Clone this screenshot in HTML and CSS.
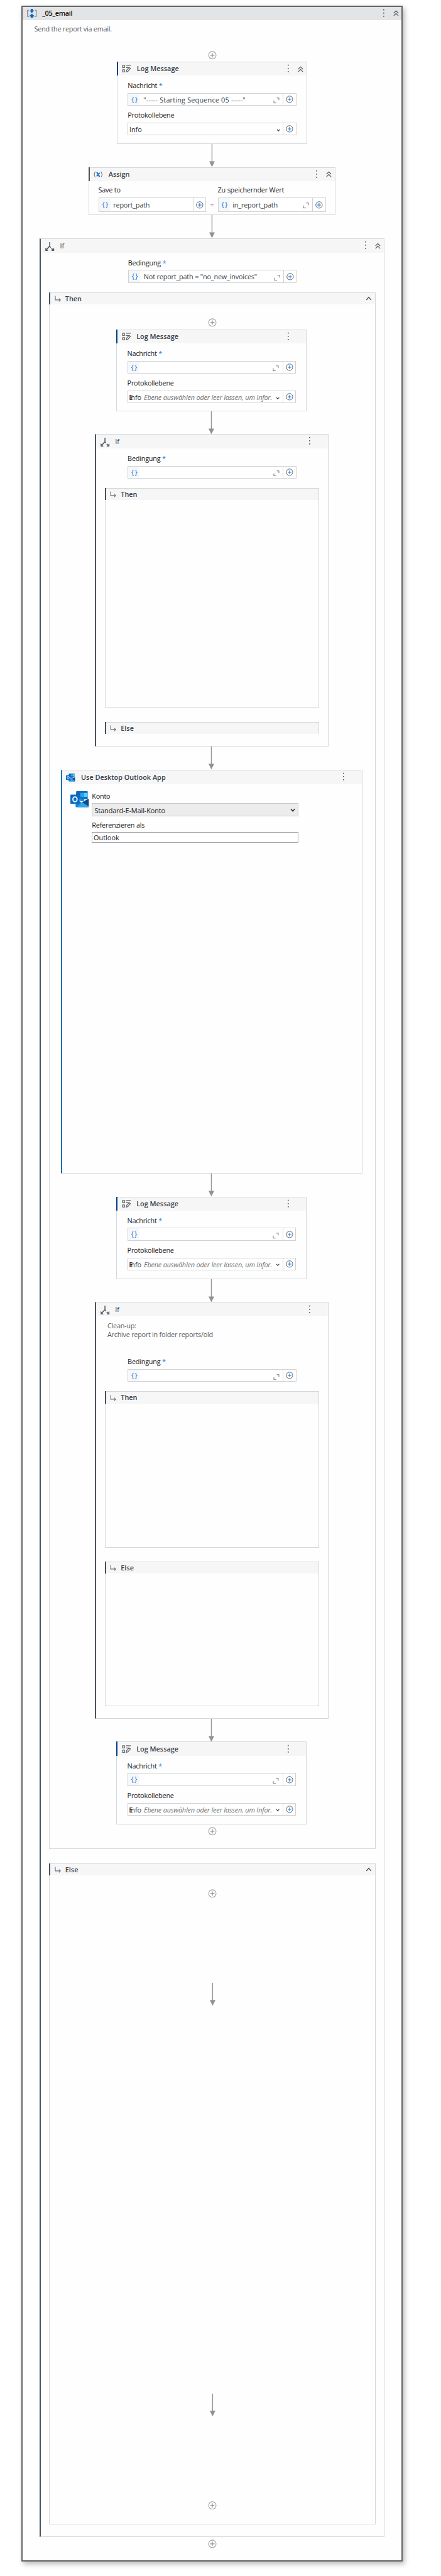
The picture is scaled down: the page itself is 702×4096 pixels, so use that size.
FILE: index.html
```
<!DOCTYPE html>
<html lang="de">
<head>
<meta charset="utf-8">
<title>_05_email</title>
<link rel="stylesheet" href="styles.css">
</head>
<body>
<svg class="defs" width="0" height="0">
  <symbol id="plus" viewBox="0 0 16 16"><circle cx="8" cy="8" r="7" fill="none" stroke="currentColor" stroke-width="1.3"/><path class="cross" d="M8 4v8M4 8h8" fill="none" stroke-width="1.4"/></symbol>
  <symbol id="dots" viewBox="0 0 4 16"><path d="M1 1h2v2H1zM1 7h2v2H1zM1 13h2v2H1z" fill="#5c5f63"/></symbol>
  <symbol id="up2" viewBox="0 0 12 12"><path d="M1.5 6 6 1.6 10.500 6M1.500 11 6 6.600 10.500 11" fill="none" stroke="#5a5d61" stroke-width="1.500"/></symbol>
  <symbol id="up1" viewBox="0 0 12 8"><path d="M1.500 6.800 6 1.600 10.500 6.800" fill="none" stroke="#55585c" stroke-width="1.700"/></symbol>
  <symbol id="down" viewBox="0 0 8 6"><path d="M1 1 4 4.500 7 1" fill="none" stroke="#333" stroke-width="1.500"/></symbol>
  <symbol id="expand" viewBox="0 0 12 12"><path d="M6.500 1H11v4.500M1 6v5h5" fill="none" stroke="#77797c" stroke-width="1.300"/></symbol>
  <symbol id="turn" viewBox="0 0 12 12"><path d="M1 .500v7.800h9.500M8 5.500l2.800 2.800L8 11.200" fill="none" stroke="#6b6f74" stroke-width="1.300"/></symbol>
  <symbol id="arrow" viewBox="0 0 12 40" preserveAspectRatio="none"><path d="M6 0v32" stroke="#949494" stroke-width="1.500"/><path d="M1 30h10L6 40z" fill="#929292"/></symbol>
  <symbol id="seq" viewBox="0 0 17 16"><path d="M3 2.500H1v11h2M14 2.500h2v11h-2" fill="none" stroke="#666" stroke-width="1.200"/><path d="M6.500 0h4v3h2L8.500 7.500 4.500 3h2zM6.500 16v-2.500h-2V12l4-3.500 4 3.500v1.500h-2V16z" fill="#0a66d0"/></symbol>
  <symbol id="log" viewBox="0 0 16 14"><path d="M1 1h3.500v4H1zM1 9h3.500v4H1zM7 1h9M7 5h5M7.500 13l.6-3L13 5l2.300 1.800-4.800 5.400z" fill="none" stroke="#5f6266" stroke-width="1.400"/></symbol>
  <symbol id="assign" viewBox="0 0 16 12"><path d="M3.200 1q-4 5 0 10M12.800 1q4 5 0 10" fill="none" stroke="#777" stroke-width="1.200"/><path d="M5 3h1.500l3 6H11M5.300 9.200 10.700 3" fill="none" stroke="#1268cf" stroke-width="1.900"/></symbol>
  <symbol id="branch" viewBox="0 0 16 16"><path d="M7.800 0v7L2 13.500M8 8l1.500 2M11 11.300l3 3" fill="none" stroke="#515b64" stroke-width="1.800"/><path d="M0 10v6h5.500zM16 10v6h-5.500z" fill="#515b64"/></symbol>
  <symbol id="outlook" viewBox="0 0 32 28"><path d="M11 0h18q1 0 1 1v13H10V1q0-1 1-1z" fill="#1266b5"/><path d="M10 4h7v6h-7z" fill="#0f5ea9"/><path d="M17 3h6.500v7H17z" fill="#2ba0e6"/><path d="M23.500 3H30v7h-6.500z" fill="#50d0fa"/><path d="M17 10h6.500v7H17z" fill="#0c7ad0"/><path d="M9 13l11 7 12-7v13q0 2-2 2H11q-2 0-2-2z" fill="#1a85d8"/><path d="M32 13v13L20 19z" fill="#124a87"/><path d="M20 19l12 8q-1 1-2 1H12z" fill="#2fa7ea"/><rect y="6" width="16" height="16" rx="1.500" fill="#0a6dc4"/><ellipse cx="8" cy="14" rx="3.600" ry="4.200" fill="none" stroke="#fff" stroke-width="2"/></symbol>
</svg>

<main class="frame">
  <header class="bar frame-bar">
    <svg class="i-seq"><use href="#seq"/></svg><b class="frame-title">_05_email</b>
    <svg class="i-dots"><use href="#dots"/></svg><svg class="i-up2"><use href="#up2"/></svg>
  </header>
  <p class="note">Send the report via email.</p>
  <svg class="drop drop-first"><use href="#plus"/></svg>

  <section class="card log">
    <header class="bar blue"><svg class="i-log"><use href="#log"/></svg><b>Log Message</b><svg class="i-dots"><use href="#dots"/></svg><svg class="i-up2"><use href="#up2"/></svg></header>
    <div class="form">
      <label>Nachricht <i class="req">*</i></label>
      <div class="field"><span class="brace">{}</span><span class="val wide">"----- Starting Sequence 05 -----"</span><svg class="i-expand"><use href="#expand"/></svg><span class="add"><svg><use href="#plus"/></svg></span></div>
      <label>Protokollebene</label>
      <div class="field"><span class="pick">Info</span><svg class="i-down"><use href="#down"/></svg><span class="add"><svg><use href="#plus"/></svg></span></div>
    </div>
  </section>
  <svg class="link"><use href="#arrow"/></svg>

  <section class="card assign">
    <header class="bar slate"><svg class="i-assign"><use href="#assign"/></svg><b>Assign</b><svg class="i-dots"><use href="#dots"/></svg><svg class="i-up2"><use href="#up2"/></svg></header>
    <div class="pair">
      <div class="half"><label>Save to</label>
        <div class="field"><span class="brace">{}</span><span class="val">report_path</span><span class="add"><svg><use href="#plus"/></svg></span></div></div>
      <span class="eq">=</span>
      <div class="half"><label>Zu speichernder Wert</label>
        <div class="field"><span class="brace">{}</span><span class="val">in_report_path</span><svg class="i-expand"><use href="#expand"/></svg><span class="add"><svg><use href="#plus"/></svg></span></div></div>
    </div>
  </section>
  <svg class="link"><use href="#arrow"/></svg>

  <section class="card cond cond-main">
    <header class="bar"><svg class="i-branch"><use href="#branch"/></svg><b>If</b><svg class="i-dots"><use href="#dots"/></svg><svg class="i-up2"><use href="#up2"/></svg></header>
    <div class="form">
      <label>Bedingung <i class="req">*</i></label>
      <div class="field"><span class="brace">{}</span><span class="val">Not report_path = "no_new_invoices"</span><svg class="i-expand"><use href="#expand"/></svg><span class="add"><svg><use href="#plus"/></svg></span></div>
    </div>

    <section class="branch main-then">
      <header class="bar slate"><svg class="i-turn"><use href="#turn"/></svg><b>Then</b><svg class="i-up1"><use href="#up1"/></svg></header>
      <svg class="drop"><use href="#plus"/></svg>

      <div class="steps">
      <section class="card log log-short">
        <header class="bar blue"><svg class="i-log"><use href="#log"/></svg><b>Log Message</b><svg class="i-dots"><use href="#dots"/></svg></header>
        <div class="form">
          <label>Nachricht <i class="req">*</i></label>
          <div class="field"><span class="brace">{}</span><span class="val"></span><svg class="i-expand"><use href="#expand"/></svg><span class="add"><svg><use href="#plus"/></svg></span></div>
          <label>Protokollebene</label>
          <div class="field"><span class="pick"><span class="over">E</span>Info</span><em>Ebene auswählen oder leer lassen, um Infor.</em><svg class="i-down"><use href="#down"/></svg><span class="add"><svg><use href="#plus"/></svg></span></div>
        </div>
      </section>
      <svg class="link"><use href="#arrow"/></svg>

      <section class="card cond cond-a">
        <header class="bar"><svg class="i-branch"><use href="#branch"/></svg><b>If</b><svg class="i-dots"><use href="#dots"/></svg></header>
        <div class="form">
          <label>Bedingung <i class="req">*</i></label>
          <div class="field"><span class="brace">{}</span><span class="val"></span><svg class="i-expand"><use href="#expand"/></svg><span class="add"><svg><use href="#plus"/></svg></span></div>
        </div>
        <section class="branch a-then"><header class="bar slate"><svg class="i-turn"><use href="#turn"/></svg><b>Then</b></header></section>
        <section class="branch a-else"><header class="bar slate"><svg class="i-turn"><use href="#turn"/></svg><b>Else</b></header></section>
      </section>
      <svg class="link"><use href="#arrow"/></svg>

      <section class="card mail">
        <header class="bar"><svg class="i-mail"><use href="#outlook"/></svg><b>Use Desktop Outlook App</b><svg class="i-dots"><use href="#dots"/></svg></header>
        <div class="mail-body">
          <svg class="mail-logo"><use href="#outlook"/></svg>
          <div class="mail-form">
            <label>Konto</label>
            <div class="select">Standard-E-Mail-Konto<svg><use href="#down"/></svg></div>
            <label>Referenzieren als</label>
            <div class="input">Outlook</div>
          </div>
        </div>
      </section>
      <svg class="link"><use href="#arrow"/></svg>

      <section class="card log">
        <header class="bar blue"><svg class="i-log"><use href="#log"/></svg><b>Log Message</b><svg class="i-dots"><use href="#dots"/></svg></header>
        <div class="form">
          <label>Nachricht <i class="req">*</i></label>
          <div class="field"><span class="brace">{}</span><span class="val"></span><svg class="i-expand"><use href="#expand"/></svg><span class="add"><svg><use href="#plus"/></svg></span></div>
          <label>Protokollebene</label>
          <div class="field"><span class="pick"><span class="over">E</span>Info</span><em>Ebene auswählen oder leer lassen, um Infor.</em><svg class="i-down"><use href="#down"/></svg><span class="add"><svg><use href="#plus"/></svg></span></div>
        </div>
      </section>
      <svg class="link"><use href="#arrow"/></svg>

      <section class="card cond cond-b">
        <header class="bar"><svg class="i-branch"><use href="#branch"/></svg><b>If</b><svg class="i-dots"><use href="#dots"/></svg></header>
        <p class="note note-b">Clean-up:<br>Archive report in folder reports/old</p>
        <div class="form">
          <label>Bedingung <i class="req">*</i></label>
          <div class="field"><span class="brace">{}</span><span class="val"></span><svg class="i-expand"><use href="#expand"/></svg><span class="add"><svg><use href="#plus"/></svg></span></div>
        </div>
        <section class="branch b-then"><header class="bar slate"><svg class="i-turn"><use href="#turn"/></svg><b>Then</b></header></section>
        <section class="branch b-else"><header class="bar slate"><svg class="i-turn"><use href="#turn"/></svg><b>Else</b></header></section>
      </section>
      <svg class="link"><use href="#arrow"/></svg>

      <section class="card log">
        <header class="bar blue"><svg class="i-log"><use href="#log"/></svg><b>Log Message</b><svg class="i-dots"><use href="#dots"/></svg></header>
        <div class="form">
          <label>Nachricht <i class="req">*</i></label>
          <div class="field"><span class="brace">{}</span><span class="val"></span><svg class="i-expand"><use href="#expand"/></svg><span class="add"><svg><use href="#plus"/></svg></span></div>
          <label>Protokollebene</label>
          <div class="field"><span class="pick"><span class="over">E</span>Info</span><em>Ebene auswählen oder leer lassen, um Infor.</em><svg class="i-down"><use href="#down"/></svg><span class="add"><svg><use href="#plus"/></svg></span></div>
        </div>
      </section>
      </div>
      <svg class="drop drop-end"><use href="#plus"/></svg>
    </section>

    <section class="branch main-else">
      <header class="bar slate"><svg class="i-turn"><use href="#turn"/></svg><b>Else</b><svg class="i-up1"><use href="#up1"/></svg></header>
      <svg class="drop"><use href="#plus"/></svg>
      <svg class="link link-a"><use href="#arrow"/></svg>
      <svg class="link link-b"><use href="#arrow"/></svg>
      <svg class="drop drop-else"><use href="#plus"/></svg>
    </section>
  </section>
  <svg class="drop drop-end"><use href="#plus"/></svg>
</main>
</body>
</html>
```
FILE: styles.css
```
/* 1rem = ten design units */
html { font-size: 9.074px; }
* { box-sizing: border-box; }
body {
  margin: 0; height: 4096px; overflow: hidden; background: #fff;
  padding: 1rem 0 0 3.8rem;
  font-family: "Open Sans", "Noto Sans", sans-serif; color: #222;
}
svg { display: block; flex: none; overflow: visible; }
.defs { position: absolute; }
p { margin: 0; }

.frame {
  width: 66.8rem; height: 447.87rem;
  border: 2px solid #646464; background: #fefefe;
  box-shadow: 3px 4px 8px rgba(0,0,0,.28);
  display: flex; flex-direction: column; align-items: center;
}
.bar {
  display: flex; align-items: center; position: relative; flex: none; align-self: stretch;
  height: calc(2.5rem - 1px); padding: 0 .5rem 0 .8rem; background: #f6f6f7;
  font-size: 1.2rem; line-height: 1.6rem; color: #36424d;
}
.bar b { font-weight: 600; margin-left: 1rem; white-space: nowrap; }
.bar .i-dots { margin-left: auto; }
.frame-bar { height: calc(2.5rem - 2px); padding: 0 .35rem 0 .7rem; background: #e3e4e6; color: #0c0c0c; }
.bar .frame-title { margin-left: 1rem; letter-spacing: -.035rem; }

.i-seq { width: 1.7rem; height: 1.6rem; }
.i-log { width: 1.6rem; height: 1.35rem; }
.i-assign { width: 1.6rem; height: 1.2rem; }
.i-branch { width: 1.6rem; height: 1.55rem; position: relative; top: .1rem; }
.i-turn { width: 1.15rem; height: 1.1rem; }
.i-mail { width: 1.6rem; height: 1.4rem; }
.i-dots { width: .4rem; height: 1.5rem; position: relative; top: -.1rem; }
.i-up2 { width: 1.2rem; height: 1.1rem; margin-left: 1.35rem; }
.i-up1 { width: 1.1rem; height: .8rem; margin-left: auto; }
.i-dots:last-child { margin-right: 2.5rem; }

.note { align-self: stretch; margin: .8rem 0 0 2rem; font-size: 1.2rem; line-height: 1.6rem; color: #5c5d5f; letter-spacing: -.03rem; }
.drop { width: 1.55rem; height: 1.5rem; color: #a0a0a0; stroke: #8f8f8f; margin-bottom: .43rem; }
.drop-first { margin-top: 3rem; margin-bottom: .38rem; }
.drop-end { margin-top: .42rem; }
.link { width: 1.2rem; height: 4.03rem; }

.card {
  flex: none; display: flex; flex-direction: column; align-items: center;
  border: 1px solid #d3d8dc; background: #fefefe;
}
.blue::before, .slate::before {
  content: ""; position: absolute; left: -1px; top: -1px; bottom: 0; width: 2px; background: #46515b;
}
.blue::before { background: #003f85; }

.form { width: 29.6rem; display: flex; flex-direction: column; margin-top: .95rem; }
label { font-size: 1.2rem; line-height: 1.6rem; height: 1.6rem; letter-spacing: -.025rem; white-space: nowrap; color: #222; }
.req { font-style: normal; color: #2f7fe0; }
.field {
  display: flex; align-items: stretch; height: 2.24rem; margin-top: .45rem; position: relative;
  border: 1px solid #d0d3d6; background: #fff; font-size: 1.2rem; line-height: 2.2rem;
}
.field + label { margin-top: .93rem; }
.brace { width: 2rem; padding-left: .55rem; background: #f6f7f8; color: #1673d8; line-height: 1.9rem; letter-spacing: .13rem; font-size: 1.25rem; font-weight: 500; }
.val { flex: 1; padding-left: .65rem; white-space: nowrap; color: #333e48; letter-spacing: -.02rem; }
.wide { letter-spacing: .02rem; }
.i-expand { width: 1.1rem; height: 1.05rem; margin: .75rem .6rem 0 0; }
.pick { position: relative; padding-left: .2rem; color: #2c2c2c; letter-spacing: -.01rem; }
.over { position: absolute; left: .2rem; top: 0; }
.field em { flex: none; margin-left: .45rem; white-space: nowrap; color: #707275; letter-spacing: -.02rem; }
.i-down { width: .7rem; height: .5rem; margin: .95rem .45rem 0 auto; }
.add { width: 2.25rem; display: flex; align-items: center; justify-content: center; border-left: 1px solid #d0d3d6; }
.add svg { width: 1.3rem; height: 1.3rem; color: #50565d; stroke: #1577dc; }

.log { width: 33.4rem; height: 14.47rem; }
.log-short { height: 14.34rem; }

.assign { width: 43.35rem; height: 8.47rem; }
.pair { display: flex; margin-top: .7rem; }
.half { width: 18.95rem; display: flex; flex-direction: column; }
.half .field { height: 2.54rem; margin-top: .53rem; line-height: 2.5rem; }
.half .brace { line-height: 2.2rem; }
.half .val { padding-left: .5rem; }
.half .i-expand { margin-top: .75rem; }
.eq { width: 2rem; text-align: center; font-size: 1.2rem; line-height: 1.6rem; margin-top: 2.7rem; color: #555; }

.cond { border-left: 2px solid #4a545e; }
.cond .form { margin-top: 1rem; }
.cond-main { width: 60.5rem; height: 402.77rem; }
.cond-a { width: 41rem; height: 54.77rem; }
.cond-b { width: 41rem; height: 73rem; }
.cond > .bar { padding-left: .75rem; }
.cond > .bar b { margin-left: 1rem; font-weight: 500; }
.cond .log .form { margin-top: .95rem; }

.branch { flex: none; display: flex; flex-direction: column; align-items: center; border: 1px solid #d3d8dc; }
.branch > .bar { height: calc(2.17rem - 1px); padding-right: .5rem; }
.branch > .bar b { margin-left: .75rem; }
.branch > .drop { margin-top: 2.4rem; }
.branch > .drop-end { margin-top: .42rem; }
.steps { display: flex; flex-direction: column; align-items: center; padding-right: .25rem; }
.cond-a .branch, .cond-b .branch { width: 37.6rem; }
.main-then { width: 57.25rem; height: 272.84rem; margin-top: 1.66rem; }
.main-else { width: 57.25rem; height: 115.9rem; margin-top: 2.43rem; }
.a-then { height: 38.57rem; margin-top: 1.6rem; }
.a-else { height: 2.17rem; margin-top: 2.43rem; }
.b-then { height: 27.4rem; margin-top: 1.63rem; }
.b-else { height: 25.4rem; margin-top: 2.4rem; }
.note-b { margin: .83rem 0 0 2rem; }
.cond-b .form { margin-top: 3.17rem; }
.link-a { margin-top: 14.44rem; height: 4rem; }
.link-b { margin-top: 68rem; height: 4rem; }
.branch > .drop-else { margin-top: 14.83rem; }

.mail { width: 52.95rem; height: 70.77rem; border-left: 2px solid #1b72b2; }
.mail > .bar { height: calc(2.6rem - 1px); padding-left: .75rem; }
.mail > .bar b { margin-left: 1rem; }
.mail-body { align-self: stretch; display: flex; padding: 1.2rem 0 0 1.45rem; }
.mail-logo { width: 3.25rem; height: 2.85rem; }
.mail-form { width: 36.2rem; display: flex; flex-direction: column; margin: .05rem 0 0 .55rem; color: #1a1a1a; font-size: 1.2rem; }
.mail-form label { color: #1a1a1a; }
.select { display: flex; align-items: center; justify-content: space-between; height: 2.3rem; margin: .45rem 0 .7rem; padding: .1rem .4rem 0 .35rem; border: 1px solid #c9c9cb; background: #ececed; letter-spacing: -.01rem; }
.select svg { width: .9rem; height: .7rem; }
.input { height: 1.9rem; line-height: 1.75rem; margin-top: .4rem; padding-left: .2rem; border: 1px solid #a3a3a6; background: #fff; }
```
